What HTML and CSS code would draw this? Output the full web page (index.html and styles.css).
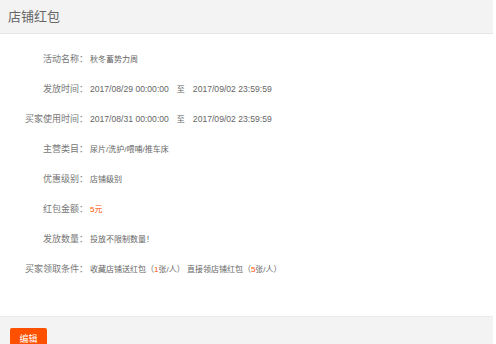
FILE: index.html
```html
<!DOCTYPE html>
<html lang="zh-CN">
<head>
  <meta charset="UTF-8">
  <title>店铺红包</title>
  <link rel="stylesheet" href="styles.css">
</head>
<body>
  <div class="page">
    <div class="panel-head">店铺红包</div>

    <div class="detail">
      <div class="row">
        <span class="label">活动名称：</span>
        <span class="value">秋冬蓄势力周</span>
      </div>
      <div class="row">
        <span class="label">发放时间：</span>
        <span class="value"><span class="date">2017/08/29 00:00:00</span><span class="to">至</span><span class="date">2017/09/02 23:59:59</span></span>
      </div>
      <div class="row">
        <span class="label">买家使用时间：</span>
        <span class="value"><span class="date">2017/08/31 00:00:00</span><span class="to">至</span><span class="date">2017/09/02 23:59:59</span></span>
      </div>
      <div class="row">
        <span class="label">主营类目：</span>
        <span class="value">尿片/洗护/喂哺/推车床</span>
      </div>
      <div class="row">
        <span class="label">优惠级别：</span>
        <span class="value">店铺级别</span>
      </div>
      <div class="row">
        <span class="label">红包金额：</span>
        <span class="value hot">5元</span>
      </div>
      <div class="row">
        <span class="label">发放数量：</span>
        <span class="value">投放不限制数量！</span>
      </div>
      <div class="row">
        <span class="label">买家领取条件：</span>
        <span class="value">收藏店铺送红包（<em class="hot">1</em>张/人） 直接领店铺红包（<em class="hot">5</em>张/人）</span>
      </div>
    </div>

    <div class="panel-foot">
      <button class="btn-edit">编辑</button>
    </div>
  </div>
</body>
</html>
```

FILE: styles.css
```css
body {
  margin: 0;
  background: #fff;
  font-family: "Liberation Sans", "Noto Sans CJK SC", sans-serif;
  color: #666;
}

.page {
  width: 493px;
}

.panel-head {
  height: 33px;
  line-height: 33px;
  padding-left: 8px;
  background: #f3f3f3;
  border-bottom: 1px solid #e6e6e6;
  font-size: 13px;
  color: #666;
}

.detail {
  padding: 9px 0 33px;
}

.row {
  display: flex;
  align-items: center;
  height: 30px;
}

.label {
  width: 88px;
  text-align: right;
  font-size: 9px;
  color: #777;
}

.value {
  margin-left: 2px;
  font-size: 8px;
  color: #666;
}

.date {
  font-size: 8.6px;
}

.to {
  margin: 0 8px;
}

.hot {
  color: #ff5000;
}

em {
  font-style: normal;
}

.panel-foot {
  height: 27px;
  padding: 11px 0 0 10px;
  background: #f3f3f3;
  border-top: 1px solid #ececec;
  overflow: hidden;
}

.btn-edit {
  display: block;
  width: 37px;
  height: 20px;
  padding: 0;
  border: none;
  border-radius: 2px;
  background: #ff5000;
  color: #fff;
  font-family: "Noto Sans CJK SC", sans-serif;
  font-size: 9px;
}
```
